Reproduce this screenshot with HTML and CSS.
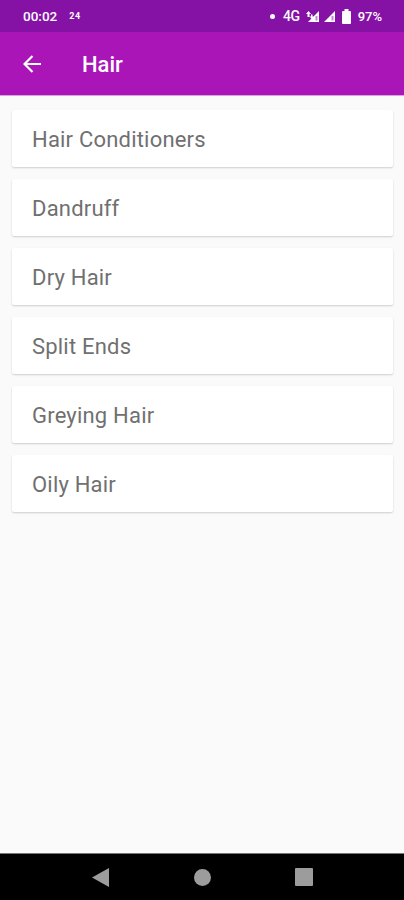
FILE: index.html
```html
<!DOCTYPE html>
<html lang="en">
<head>
  <meta charset="utf-8">
  <title>Hair</title>
  <link rel="stylesheet" href="styles.css">
</head>
<body>
  <div class="status-bar">
    <span class="clock">00:02</span>
    <span class="notification">24</span>
    <div class="status-icons">
      <span class="dot"></span>
      <span class="network">4G</span>
      <svg class="signal-data" width="13" height="11" viewBox="0 0 13 11">
        <path d="M13 0v11H2l4-4z" fill="#fff"/>
        <path d="M2.500 0L5 3H3.500v3h-2V3H0zM5 3.500h1.500v2H8L5.700 8 3.500 5.500H5z" fill="#fff"/>
        <path d="M9.500 5h2v4.500h-2z" fill="#8511a5" opacity=".5"/>
      </svg>
      <svg class="signal" width="11" height="11" viewBox="0 0 11 11">
        <path d="M11 0v11H0z" fill="#fff"/>
        <path d="M7.500 5h2v4.500h-2z" fill="#8511a5" opacity=".5"/>
      </svg>
      <svg class="battery" width="9" height="15" viewBox="0 0 9 15">
        <path d="M2.500 0h4v2H8a1 1 0 0 1 1 1v11a1 1 0 0 1-1 1H1a1 1 0 0 1-1-1V3a1 1 0 0 1 1-1h1.500z" fill="#fff"/>
      </svg>
      <span class="percent">97%</span>
    </div>
  </div>
  <div class="header">
    <svg class="back" width="18" height="18" viewBox="0 0 18 18">
      <path d="M18 9H1.500M9.500 1L1.500 9l8 8" stroke="#fff" stroke-width="2.200" fill="none"/>
    </svg>
    <span class="title">Hair</span>
  </div>
  <div class="list">
    <div class="card">Hair Conditioners</div>
    <div class="card">Dandruff</div>
    <div class="card">Dry Hair</div>
    <div class="card">Split Ends</div>
    <div class="card">Greying Hair</div>
    <div class="card">Oily Hair</div>
  </div>
  <div class="nav-bar">
    <svg width="17" height="19" viewBox="0 0 17 19"><path d="M17 0v19L0 9.500z" fill="#9c9c9c"/></svg>
    <svg width="17" height="17" viewBox="0 0 17 17"><circle cx="8.500" cy="8.500" r="8.500" fill="#9c9c9c"/></svg>
    <svg width="18" height="18" viewBox="0 0 18 18"><rect width="18" height="18" rx="1" fill="#9c9c9c"/></svg>
  </div>
</body>
</html>
```
FILE: styles.css
```css
body {
  margin: 0;
  height: 900px;
  display: flex;
  flex-direction: column;
  overflow: hidden;
  background-color: #fafafa;
  font-family: Roboto, sans-serif;
  color: #707070;
}

.status-bar {
  display: flex;
  align-items: center;
  box-sizing: border-box;
  height: 32px;
  padding: 0 22px 0 23px;
  background-color: #8511a5;
  color: #fff;
  font-size: 13px;
  font-weight: 500;
}

.clock {
  font-size: 13.5px;
}

.notification {
  margin-left: 12px;
  font-size: 9px;
  font-weight: 700;
  letter-spacing: 0.5px;
}

.status-icons {
  display: flex;
  align-items: center;
  margin-left: auto;
}

.dot {
  width: 5px;
  height: 5px;
  margin-right: 8px;
  border-radius: 50%;
  background-color: #fff;
}

.network {
  font-size: 14px;
  letter-spacing: -0.4px;
}

.signal-data {
  margin-left: 6px;
}

.signal {
  margin-left: 5px;
}

.battery {
  margin: 0 7px;
}

.header {
  display: flex;
  align-items: center;
  box-sizing: border-box;
  height: 64px;
  padding: 0 23px;
  border-bottom: 1px solid #d9a3df;
  background-color: #aa15b7;
}

.title {
  margin-left: 41px;
  padding-top: 2px;
  color: #fff;
  font-size: 22px;
  font-weight: 500;
}

.list {
  display: flex;
  flex: 1;
  flex-direction: column;
  gap: 12px;
  padding: 14px 11px 0 12px;
}

.card {
  height: 57px;
  padding-left: 20px;
  border-radius: 2px;
  background-color: #fff;
  box-shadow: 0 1px 2px rgba(0, 0, 0, .18);
  font-size: 22px;
  line-height: 60px;
  letter-spacing: 0.2px;
}

.nav-bar {
  display: flex;
  align-items: center;
  justify-content: space-between;
  box-sizing: border-box;
  height: 47px;
  padding: 0 91px 0 92px;
  border-top: 1px solid #777;
  background-color: #000;
}
```
